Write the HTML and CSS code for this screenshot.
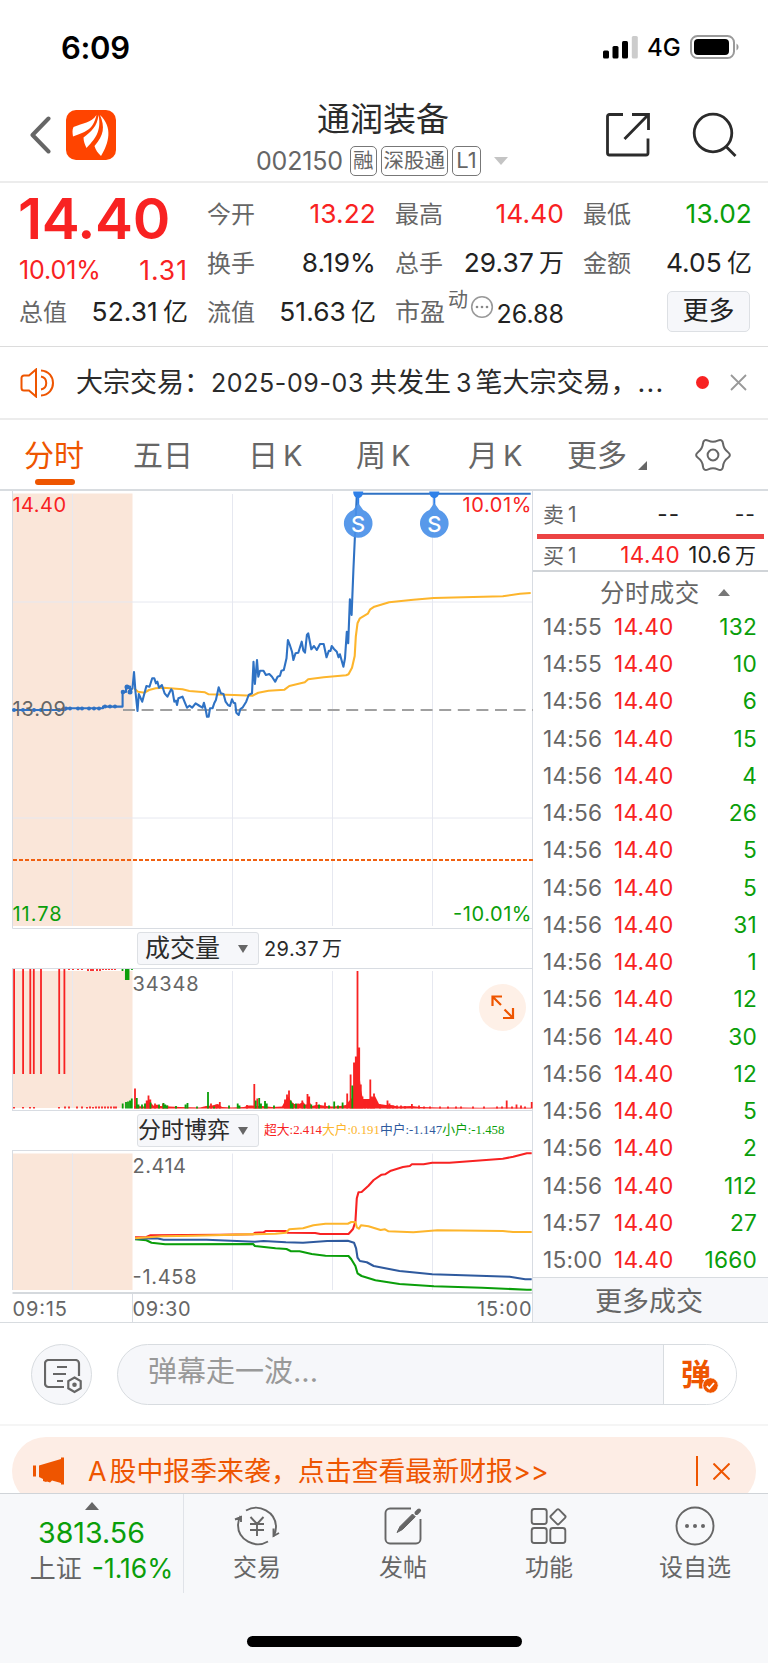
FILE: index.html
```
<!DOCTYPE html>
<html lang="zh-CN">
<head>
    <meta charset="UTF-8">
    <meta name="viewport" content="width=device-width, initial-scale=1.0">
    <title>通润装备 002150</title>
    <link rel="stylesheet" href="styles.css">
</head>
<body>
    <div class="status-bar">
        <span class="clock">6:09</span>
        <div class="status-icons">
            <svg width="36" height="23" viewBox="0 0 36 23">
                <rect x="0" y="14.5" width="6" height="8" rx="1.5"/>
                <rect x="9.5" y="10" width="6" height="12.5" rx="1.5"/>
                <rect x="19" y="5" width="6" height="17.5" rx="1.5"/>
                <rect x="28.8" y="0" width="6" height="22.5" rx="1.5" fill="#ccc"/>
            </svg>
            <span class="network">4G</span>
            <svg width="50" height="24" viewBox="0 0 50 24">
                <rect x="1" y="1" width="43" height="22" rx="6.5" fill="none" stroke="#9a9a9a" stroke-width="2"/>
                <rect x="4" y="4" width="35" height="16" rx="4"/>
                <path d="M46.5 8.500a4 4 0 0 1 0 7z" fill="#9a9a9a"/>
            </svg>
        </div>
    </div>

    <header class="header">
        <div class="header-left">
            <svg width="22" height="38" viewBox="0 0 22 38"><path d="M18.500 2.500 2.500 19l16 16.500" fill="none" stroke="#666" stroke-width="4" stroke-linecap="round" stroke-linejoin="round"/></svg>
            <svg class="logo" width="50" height="50" viewBox="0 0 50 50">
                <rect width="50" height="50" rx="10" fill="#ff4400"/>
                <path d="M30.500 5C25 13 17 13 7.500 17c-1.500 3-1 6-.5 9.500C18 22 27 21 30.500 5z" fill="#fff"/>
                <path d="M32.500 5c-1.500 12-7 16-15 22.500 0 4 1.500 7 3 10.500C28 30 36 22 32.500 5z" fill="#fff"/>
                <path d="M34 5c5 12 4 20-5.500 31 1 4 3.500 7 6.500 10 8-13 12-29-1-41z" fill="#fff"/>
            </svg>
        </div>
        <div class="header-title">
            <h1>通润装备</h1>
            <div class="code-row">
                <span class="code">002150</span>
                <span class="tag">融</span>
                <span class="tag">深股通</span>
                <span class="tag level1">L1</span>
                <svg class="caret" width="14" height="8" viewBox="0 0 14 8"><path d="M0 0h14L7 8z" fill="#c4c4c4"/></svg>
            </div>
        </div>
        <div class="header-right">
            <svg width="46" height="46" viewBox="0 0 46 46" fill="none" stroke="#2b2b2b" stroke-width="2.800">
                <path d="M18 2.500H4.500a2 2 0 0 0-2 2V41a2 2 0 0 0 2 2H41a2 2 0 0 0 2-2V26.500M27 2.500h16.500V18M43 3 19.500 27"/>
            </svg>
            <svg width="46" height="46" viewBox="0 0 46 46" fill="none" stroke="#2b2b2b" stroke-width="2.800">
                <circle cx="21" cy="21" r="18.800"/><path d="m34 34.500 9.500 9.500"/>
            </svg>
        </div>
    </header>

    <section class="quote">
        <div class="quote-col">
            <div class="price">14.40</div>
            <div class="change red"><span>10.01%</span><span class="diff">1.31</span></div>
            <div class="stat"><label>总值</label><b>52.31<i>亿</i></b></div>
        </div>
        <div class="quote-col">
            <div class="stat"><label>今开</label><b class="red">13.22</b></div>
            <div class="stat"><label>换手</label><b>8.19%</b></div>
            <div class="stat"><label>流值</label><b>51.63<i>亿</i></b></div>
        </div>
        <div class="quote-col">
            <div class="stat"><label>最高</label><b class="red">14.40</b></div>
            <div class="stat"><label>总手</label><b>29.37<i>万</i></b></div>
            <div class="stat pe">
                <label>市盈<sup>动</sup></label>
                <svg width="24" height="24" viewBox="0 0 24 24"><circle cx="12" cy="12" r="10.300" fill="none" stroke="#999" stroke-width="1.600"/><g fill="#888"><circle cx="7" cy="12" r="1.300"/><circle cx="12" cy="12" r="1.300"/><circle cx="17" cy="12" r="1.300"/></g></svg>
                <b>26.88</b>
            </div>
        </div>
        <div class="quote-col">
            <div class="stat"><label>最低</label><b class="green">13.02</b></div>
            <div class="stat"><label>金额</label><b>4.05<i>亿</i></b></div>
            <div class="stat"><button class="more-btn">更多</button></div>
        </div>
    </section>

    <section class="notice">
        <svg width="36" height="30" viewBox="0 0 36 30" fill="none" stroke="#ee5500" stroke-width="2">
            <path d="M16 1.500v27L9 22.500H4a2.500 2.500 0 0 1-2.500-2.500V10A2.500 2.500 0 0 1 4 7.500h5zM21 2.500c16 1 16 24 0 25M21 8.500c7 1.500 7 11.500 0 13"/>
        </svg>
        <span class="notice-text">大宗交易：<em class="date">2025-09-03</em>共发生<em>3</em>笔大宗交易，<span class="ellipsis">...</span></span>
        <span class="dot"></span>
        <svg width="17" height="17" viewBox="0 0 17 17"><path d="m1 1 15 15M16 1 1 16" stroke="#999" stroke-width="1.800"/></svg>
    </section>

    <nav class="tabs">
        <a class="tab active">分时</a>
        <a class="tab">五日</a>
        <a class="tab">日<em>K</em></a>
        <a class="tab">周<em>K</em></a>
        <a class="tab">月<em>K</em></a>
        <a class="tab tab-more">更多<svg width="9" height="9" viewBox="0 0 9 9"><path d="M9 0v9H0z" fill="#666"/></svg></a>
        <svg class="gear" width="36" height="34" viewBox="-18 -17 36 34" fill="none" stroke="#666" stroke-width="2">
            <circle r="5.400"/>
            <path d="M14.800 3.050Q10.600 6.100 10.050 11.300 9.500 16.500 4.750 14.350 0 12.200-4.750 14.350-9.500 16.500-10.050 11.300-10.600 6.100-14.800 3.050-19 0-14.800-3.050-10.600-6.100-10.050-11.300-9.500-16.500-4.750-14.350 0-12.200 4.750-14.350 9.500-16.500 10.050-11.300 10.600-6.100 14.800-3.050 19 0 14.800 3.050z"/>
        </svg>
    </nav>

    <main class="market">
        <div class="charts">
            <!-- price -->
            <svg class="chart" width="533" height="438" viewBox="0 491 533 438">
                <rect x="13" y="493.500" width="119.500" height="432.500" fill="#fae6d9"/>
                <path class="grid" d="M72.500 494v432M232.500 494v432M332.500 494v432M432.500 494v432M13 602h520M13 818h520"/>
                <path class="frame" d="M12.500 491v437.500H533M532.500 491v438"/>
                <path d="M123 710h410" stroke="#a0a0a0" stroke-width="1.800" stroke-dasharray="12 6.600"/>
                <path d="M13 860h520" stroke="#f06010" stroke-width="2" stroke-dasharray="4 2"/>
                <polyline class="line yellow-line" points="134,688.3 138,691.7 144.600,692.7 149,690 155.700,688.3 163.600,687.7 182.500,689.3 189.400,691 205,692.3 208.700,694.3 234.200,695 252.400,695.7 258.300,692.7 268.600,690.7 284.500,689.7 289.300,686 304.800,682.3 308.200,679.3 323.700,677.3 346.100,675.3 348.500,674.3 352,667.7 354.700,656 355.800,636.7 357.500,623.3 359.900,618.3 367.800,613.7 370.200,609.3 374.300,606.7 389.200,602.3 413.300,599.7 433.900,598 502.800,596.3 520,593.7 530.700,593"/>
                <polyline class="line price-line" points="13,710 65,710 65,708.3 103,708.3 103,706.6 122.600,706.6 122.600,692 126,692 126,686.5 130,686.5 130,692 132.500,688 134,672 135.500,692 137.500,711 138.800,694 142.200,701.7 144.600,692.7 146.400,686 149.500,686.7 152.200,678.3 154.300,678.3 156,683.3 157.400,681.7 159,687.7 161.900,685 164.600,693.3 167.400,696.7 171.200,689.3 172.500,691 174.300,701.7 176,700.7 177,705 178.400,698.3 182.500,696.7 184.900,702.7 187,707.7 189.400,705.7 192.200,707.7 195.600,703.3 199.700,706 202.500,707.7 203.900,702.7 205.600,709.3 207,716.7 208.700,716.7 210,708.3 212.500,708.3 214.200,703.3 215.900,700 218.700,687.3 220.800,693.3 223.500,694 225.600,701.7 228,705 230,706 232,699.3 233.500,702.7 235.200,703.3 236.300,712.7 238.700,715 240.400,709 242.800,707.3 246.200,701.7 248.700,695 252,693.3 253.500,661.7 254.900,684 257,660 258.300,676.7 260,670.7 263.500,670.7 265.900,675 269.300,674 272,676.7 275.200,681.7 277.600,676.7 280,675.7 281.400,670.7 283.800,670 286.500,658.3 287.900,640 289.600,644.3 292,651.7 293.400,660 295.500,653.3 298.300,652.7 301.700,641.7 303.400,650.7 305,652.7 306.900,635 308.200,633.3 311.300,649.3 314,646 316.800,650 320,644 323.700,644 326.500,657.3 328.900,650.7 330.500,651 331.700,646 334,649 336.800,651.7 338.500,657.3 339.900,654.3 343.400,666.7 345,658.3 346.800,631.7 348.200,643.3 349.900,599.3 351.600,615 353.400,570 356.800,495 357,493.700 530.700,493.700"/>
                <g fill="#2f72c4">
                    <circle cx="14" cy="710" r="2"/><circle cx="23" cy="710" r="2"/><circle cx="34" cy="710" r="2"/><circle cx="41" cy="710" r="2"/><circle cx="59" cy="710" r="2"/>
                    <circle cx="66" cy="708.500" r="2"/><circle cx="70" cy="708.500" r="2"/><circle cx="78" cy="708.500" r="2"/><circle cx="82" cy="708.500" r="2"/><circle cx="89" cy="708.500" r="2"/><circle cx="94" cy="708.500" r="2"/><circle cx="99" cy="708.500" r="2"/>
                    <circle cx="105" cy="706.500" r="2"/><circle cx="110" cy="706.500" r="2"/><circle cx="115" cy="706.500" r="2"/><circle cx="123" cy="692" r="2.300"/><circle cx="127" cy="687" r="2.500"/><circle cx="130" cy="692" r="2.500"/>
                </g>
                <g fill="#2f80e8">
                    <path d="M353.200 491.500h10c0 4-2 6.500-5 6.500s-5-2.500-5-6.500zM429.300 491.500h10c0 4-2 6.500-5 6.500s-5-2.500-5-6.500z"/>
                    <path d="M358.200 497v8M434.300 497v8" stroke="#2f80e8" stroke-width="2"/>
                </g>
                <path d="M358.200 503l5 7a14.300 14.300 0 1 1-10 0zM434.300 503l5 7a14.300 14.300 0 1 1-10 0z" fill="#4a90e8" fill-opacity=".92"/>
                <text class="marker" x="358.200" y="531.500">S</text>
                <text class="marker" x="434.300" y="531.500">S</text>
                <text class="red" x="12.500" y="511.800" textLength="53.500">14.40</text>
                <text class="red" x="462.500" y="511.800" textLength="69">10.01%</text>
                <text x="12.500" y="716" textLength="53.500">13.09</text>
                <text class="green" x="12.500" y="921" textLength="49">11.78</text>
                <text class="green" x="453" y="921" textLength="78.500">-10.01%</text>
            </svg>

            <div class="indicator">
                <span class="select">成交量<i></i></span>
                <span class="volume-total"><em>29.37</em>万</span>
            </div>

            <!-- volume -->
            <svg class="chart" width="533" height="143" viewBox="0 968 533 143">
                <rect x="13" y="971" width="119.500" height="137" fill="#fae6d9"/>
                <path class="grid" d="M72.500 971v137M232.500 971v137M332.500 971v137M432.500 971v137"/>
                <path class="frame" d="M12.500 968.500H533M12.500 1110.500H533M12.500 968v143M532.500 968v143"/>
                <path class="bar red-bar" stroke-width="2.200" d="M14.100 969v105M23.100 969v105M30.300 969v105M33.800 969v105M41 969v105M59.200 969v105M64.400 969v105"/>
                <path class="bar red-bar" d="M69 969v1M73 969v1M78 969v1M82 969v1M88 969v2M91 969v2M93 969v2M97 969v2M100 969v2M103 969v1M106 969v1M109 969v1M112 969v1M115 969v1"/>
                <path class="bar green-bar" d="M122.500 969v2M132 969v1"/>
                <path stroke="#0a9e0a" stroke-width="4.500" d="M127.200 969v11"/>
                <path class="bar red-bar" d="M14 1108.500v-1.500M23 1108.500v-1.500M30 1108.500v-1.500M34 1108.500v-1.500M59 1108.500v-1.500M65 1108.500v-2M69 1108.500v-2M77 1108.500v-2M82 1108.500v-2M87 1108.500v-1.500M90 1108.500v-2M93 1108.500v-1.500M96 1108.500v-2M99 1108.500v-2M102 1108.500v-2M105 1108.500v-2M108 1108.500v-2M111 1108.500v-2M114 1108.500v-2M116 1108.500v-2"/>
                <polygon class="red-area" points="134,1108.500 134,1106 144,1106.500 146,1103 151,1103 154,1106 157,1104.500 160,1106 170,1106.500 180,1107 200,1107.500 206,1106 212,1105.500 218,1104 222,1107 232,1107.500 244,1107 248,1105.500 252,1105.500 256,1106 262,1106 272,1107 282,1106.500 285,1101 288,1096 291,1101 294,1104 299,1104 303,1102 306,1105 309,1101 312,1106 316,1105 320,1105 326,1106 332,1106.500 340,1106 346,1105 349,1101 352,1098 354,1085 359,1070 361,1090 363,1099 369,1099 372,1098 375,1096 379,1104 386,1105 391,1105 398,1106.500 412,1106 420,1107 440,1107.500 450,1107.500 462,1107.500 480,1107.800 500,1107.500 531,1107.800 531,1108.500"/>
                <path class="bar red-bar" d="M135 1108.500v-20M146.700 1108.500v-8M148.500 1108.500v-13M150.300 1108.500v-9M155 1108.500v-5M163 1108.500v-5M167.500 1108.500v-3M211 1108.500v-5M216.500 1108.500v-4M219.800 1108.500v-6.500M247 1108.500v-3.500M254.300 1108.500v-24.500M257.300 1108.500v-10M285 1108.500v-9M287 1108.500v-14M289 1108.500v-18M293 1108.500v-5M298 1108.500v-5M302.300 1108.500v-8M307.500 1108.500v-14.500M309.200 1108.500v-12M316.500 1108.500v-6.500M325 1108.500v-6M347.200 1108.500v-15M350.600 1108.500v-34M354 1108.500v-46M355.800 1108.500v-52M357.500 971v137.500M359.200 1108.500v-61M360.800 1108.500v-24M362.500 1108.500v-12M365 1108.500v-9M368 1108.500v-9M370.300 1108.500v-29M372 1108.500v-12M374 1108.500v-15M380 1108.500v-4M387.500 1108.500v-8M389.500 1108.500v-5M393 1108.500v-3M397 1108.500v-3M401 1108.500v-3M405 1108.500v-2.500M411.900 1108.500v-4.500M419 1108.500v-3M424 1108.500v-2M430 1108.500v-2M440 1108.500v-2M448 1108.500v-2M456 1108.500v-2M461 1108.500v-2M473 1108.500v-2M484 1108.500v-2M497 1108.500v-2M502 1108.500v-2M506.700 1108.500v-8M512 1108.500v-2M516.500 1108.500v-4M521 1108.500v-3M525 1108.500v-2M531.700 1108.500v-6.500"/>
                <path class="bar green-bar" d="M122.700 1108.500v-5M126 1108.500v-6.500M128 1108.500v-7M130 1108.500v-8M131.800 1108.500v-10M136.800 1108.500v-10.500M138.500 1108.500v-4M142 1108.500v-4M145 1108.500v-5M150.500 1108.500v-6M159 1108.500v-4M163.500 1108.500v-5.500M165.300 1108.500v-4M167 1108.500v-3M176 1108.500v-2.500M185.500 1108.500v-4M187.500 1108.500v-5.500M197 1108.500v-2M208 1108.500v-16.500M214 1108.500v-2M229 1108.500v-3M237.700 1108.500v-5M239.500 1108.500v-3M255.700 1108.500v-8M259.200 1108.500v-10.500M261 1108.500v-5M265 1108.500v-7.500M266.800 1108.500v-5M274 1108.500v-3M290.800 1108.500v-8M292.500 1108.500v-5M296 1108.500v-5M304.500 1108.500v-4M311.300 1108.500v-4M319 1108.500v-4M329 1108.500v-3M334.200 1108.500v-7M338 1108.500v-3M342.600 1108.500v-6M352.300 1108.500v-23"/>
                <circle cx="502.500" cy="1007.500" r="23.500" fill="#fef0e7"/>
                <path d="M501 1005l-8.500-8.500M492.500 1006v-9.500h9.500M504.500 1009.500l8.500 8.500M513 1008v10h-10" fill="none" stroke="#ee5500" stroke-width="2.200"/>
                <text x="132.500" y="991.300" textLength="66">34348</text>
            </svg>

            <div class="indicator game">
                <span class="select">分时博弈<i></i></span>
                <span class="legend"><span class="red">超大:2.414</span><span class="orange">大户:0.191</span><span class="blue">中户:-1.147</span><span class="green">小户:-1.458</span></span>
            </div>

            <!-- money flow by order size -->
            <svg class="chart" width="533" height="172" viewBox="0 1150 533 172">
                <rect x="13" y="1153.500" width="119.500" height="136.500" fill="#fae6d9"/>
                <path class="grid" d="M72.500 1153.500v136.500M232.500 1153.500v136.500M332.500 1153.500v136.500M432.500 1153.500v136.500"/>
                <path class="frame" d="M12.500 1150.500H533M12.500 1150v140M532.500 1150v172M132.500 1293v29"/>
                <path d="M12.500 1293H533" stroke="#d5d9dd" stroke-width="2"/>
                <polyline class="line green-line" points="135,1239.3 146.400,1240.3 151.500,1242.7 165.300,1244.3 253.100,1244 254.900,1246 275.500,1248.3 286.500,1249 291,1251.3 299.600,1251.3 311.700,1254 325.500,1255.7 348.500,1256 351.300,1259.3 355.400,1266 357.500,1273.3 361.600,1276 375.400,1280.3 399.500,1284 433.900,1286.3 482,1287.7 526.900,1289.7 531.700,1289.7"/>
                <polyline class="line blue-line" points="135,1238.7 156.700,1238.3 163.600,1239.7 206.600,1239.7 254.900,1241.7 263.500,1241 285.900,1242.3 303,1242.7 327.200,1241 347.800,1240.7 354,1242.7 356.100,1248.3 357.500,1257.7 359.900,1261 366.800,1262.3 373.700,1266 399.500,1271 432.200,1274.3 509.700,1276.7 525.200,1279.3 531.700,1279.3"/>
                <polyline class="line red-line" points="135,1237.3 146.400,1237 150.500,1235.3 220.400,1234.7 253.100,1234.3 254.900,1232.7 263.500,1232.3 265.900,1231 285.900,1231 287.600,1232.7 315.100,1233 320.300,1234 348.500,1234 350.600,1231.7 353,1229 355.400,1221.7 356.800,1198.3 358.500,1192.3 361.600,1192 368.500,1185.7 373.700,1180 381.600,1174.7 385,1174.3 390.900,1170.7 403,1167 409.800,1166 411.900,1164.3 423.600,1164.3 432.200,1162.7 449.400,1162.7 502.800,1158.7 513.200,1156.7 526.900,1153.3 531.700,1153.3"/>
                <polyline class="line yellow-line" points="135,1238.3 161.900,1236.3 193,1235.7 275.500,1233.7 285.900,1232.7 289.300,1229.3 303,1228.3 313.400,1225.3 325.500,1223.7 347.800,1223.7 351.300,1222 355.400,1222 356.800,1227.3 358.900,1228.7 361,1225.3 368.500,1226.3 380.600,1230 385,1229.3 388.500,1231.3 413.300,1232.3 437.400,1230.3 502.800,1231 513,1232 531.700,1232"/>
                <text x="132.500" y="1173.300" textLength="53.500">2.414</text>
                <text x="132.500" y="1284" textLength="64">-1.458</text>
                <text x="12.500" y="1316" textLength="54.500">09:15</text>
                <text x="132.500" y="1316" textLength="58">09:30</text>
                <text x="477" y="1316" textLength="54.500">15:00</text>
            </svg>
        </div>

        <aside class="trades">
            <div class="level"><span>卖<em>1</em></span><span class="lv-price dash">--</span><span class="lv-vol dash">--</span></div>
            <div class="level-bar"></div>
            <div class="level buy"><span>买<em>1</em></span><span class="lv-price red">14.40</span><span class="lv-vol"><em>10.6</em>万</span></div>
            <div class="trades-title">分时成交<svg width="12" height="7" viewBox="0 0 12 7"><path d="M6 0l6 7H0z" fill="#777"/></svg></div>
            <ul class="trade-list">
                <li><span>14:55</span><span class="red">14.40</span><span class="green">132</span></li>
                <li><span>14:55</span><span class="red">14.40</span><span class="green">10</span></li>
                <li><span>14:56</span><span class="red">14.40</span><span class="green">6</span></li>
                <li><span>14:56</span><span class="red">14.40</span><span class="green">15</span></li>
                <li><span>14:56</span><span class="red">14.40</span><span class="green">4</span></li>
                <li><span>14:56</span><span class="red">14.40</span><span class="green">26</span></li>
                <li><span>14:56</span><span class="red">14.40</span><span class="green">5</span></li>
                <li><span>14:56</span><span class="red">14.40</span><span class="green">5</span></li>
                <li><span>14:56</span><span class="red">14.40</span><span class="green">31</span></li>
                <li><span>14:56</span><span class="red">14.40</span><span class="green">1</span></li>
                <li><span>14:56</span><span class="red">14.40</span><span class="green">12</span></li>
                <li><span>14:56</span><span class="red">14.40</span><span class="green">30</span></li>
                <li><span>14:56</span><span class="red">14.40</span><span class="green">12</span></li>
                <li><span>14:56</span><span class="red">14.40</span><span class="green">5</span></li>
                <li><span>14:56</span><span class="red">14.40</span><span class="green">2</span></li>
                <li><span>14:56</span><span class="red">14.40</span><span class="green">112</span></li>
                <li><span>14:57</span><span class="red">14.40</span><span class="green">27</span></li>
                <li><span>15:00</span><span class="red">14.40</span><span class="green">1660</span></li>
            </ul>
            <div class="more-trades">更多成交</div>
        </aside>
    </main>

    <section class="comment">
        <div class="round-btn">
            <svg width="38" height="35" viewBox="0 0 38 35" fill="none" stroke="#666" stroke-width="2.200">
                <path d="M35 17V4.500A3.500 3.500 0 0 0 31.500 1H4.500A3.500 3.500 0 0 0 1 4.500v20A3.500 3.500 0 0 0 4.500 28H20M13 8h10M9 15h13M13 22h6"/>
                <path d="M30.500 18.500l6.200 3.600v7.200l-6.200 3.600-6.200-3.600v-7.200z"/><circle cx="30.500" cy="25.700" r="1.200" fill="#666"/>
            </svg>
        </div>
        <div class="danmu">
            <span class="placeholder">弹幕走一波...</span>
            <div class="danmu-switch">
                <span>弹</span>
                <svg width="17" height="17" viewBox="0 0 17 17"><circle cx="8.500" cy="8.500" r="7.800" fill="#ee5500" stroke="#fff" stroke-width="1"/><path d="M4.800 9l2.500 2.500L12 6" fill="none" stroke="#fff" stroke-width="1.800"/></svg>
            </div>
        </div>
    </section>

    <section class="banner-wrap">
        <div class="banner">
            <svg width="32" height="28" viewBox="0 0 32 28" fill="#ee5500"><path d="M0 8.500h3v11H0zM6 8.500 28 2V.5h3V27.500h-3V26l-9-2.500-2 2-3-1-1 .5-3-1v-2L6 20z"/></svg>
            <span class="banner-text"><em>A</em>股中报季来袭，点击查看最新财报&gt;&gt;</span>
            <span class="banner-line"></span>
            <svg width="17" height="17" viewBox="0 0 17 17"><path d="m.5.5 16 16M16.500.5l-16 16" stroke="#ee5500" stroke-width="2"/></svg>
        </div>
    </section>

    <footer class="bottom-bar">
        <div class="index">
            <svg width="14" height="8" viewBox="0 0 14 8"><path d="M7 0l7 8H0z" fill="#666"/></svg>
            <div class="index-value">3813.56</div>
            <div class="index-name">上证<em>-1.16%</em></div>
        </div>
        <div class="action">
            <svg width="46" height="40" viewBox="-23 -20 46 40" fill="none" stroke="#666" stroke-width="1.900">
                <path d="M-11-15.500C2-23 19-14 19 1c0 4-1 7-2.500 9.500M16.500 2.500v7.500l5.500-3M11 15.500C-2 23-19 14-19-1c0-4 1-6 2.500-9M-22-6.500l6-2.500v5"/>
                <path d="M-6.500-9 0-2l6.500-7M0-2v12M-7-2H7M-7 4H7"/>
            </svg>
            <span>交易</span>
        </div>
        <div class="action">
            <svg width="40" height="40" viewBox="-20 -20 40 40" fill="none" stroke="#666" stroke-width="1.900">
                <path d="M8-17.500h-21a4.500 4.500 0 0 0-4.500 4.500v26a4.500 4.500 0 0 0 4.500 4.500h26a4.500 4.500 0 0 0 4.500-4.500V-7"/>
                <path d="M-6 6.500 -3 .5 9.500-12l2.800 2.800L-.5 3.500z" fill="#666" stroke-width="1"/><path d="M13.500-13l2.500-2.500" stroke-width="4" stroke-linecap="round"/>
            </svg>
            <span>发帖</span>
        </div>
        <div class="action">
            <svg width="40" height="40" viewBox="-20 -20 40 40" fill="none" stroke="#666" stroke-width="1.900">
                <rect x="-17.300" y="-17" width="15" height="15" rx="2.500"/><rect x="-17.300" y="2" width="15" height="15" rx="2.500"/><rect x="1.300" y="2" width="15" height="15" rx="2.500"/>
                <rect x="3.300" y="-15" width="11.500" height="11.500" rx="1.500" transform="rotate(45 9 -9.300)"/>
            </svg>
            <span>功能</span>
        </div>
        <div class="action">
            <svg width="40" height="40" viewBox="-20 -20 40 40" fill="none" stroke="#666" stroke-width="1.900">
                <circle r="18.500"/><g fill="#666" stroke="none"><circle cx="-8" r="2"/><circle r="2"/><circle cx="8" r="2"/></g>
            </svg>
            <span>设自选</span>
        </div>
        <div class="home-indicator"></div>
    </footer>
</body>
</html>
```
FILE: styles.css
```
* {
    box-sizing: border-box;
}
body {
    margin: 0;
    width: 768px;
    height: 1663px;
    overflow: hidden;
    background: #fff;
    color: #222;
    font-family: Inter, "Noto Sans CJK SC", sans-serif;
    font-size: 24px;
    line-height: 1;
}
svg {
    display: block;
    flex: none;
}
em, i {
    font-style: normal;
}
.red {
    color: #f82222;
    fill: #f82222;
}
.green {
    color: #0a9e0a;
    fill: #0a9e0a;
}
.orange {
    color: #fdb52c;
}
.blue {
    color: #2f5a9e;
}

/* status bar */
.status-bar {
    height: 94px;
    padding: 0 28px 0 61px;
    display: flex;
    justify-content: space-between;
    align-items: center;
}
.clock {
    font-size: 31px;
    font-weight: 600;
    color: #000;
    letter-spacing: -0.3px;
}
.status-icons {
    display: flex;
    align-items: center;
}
.network {
    font-size: 24px;
    font-weight: 500;
    margin: 1px 9px 0 8px;
    width: 34px;
    color: #000;
}

/* header */
.header {
    height: 89px;
    padding: 0 30px;
    display: flex;
    border-bottom: 2px solid #ececec;
}
.header-left {
    display: flex;
    align-items: center;
    width: 226px;
    height: 82px;
}
.logo {
    margin-left: 14px;
}
.header-title {
    width: 254px;
}
h1 {
    margin: 7px 0 0;
    font-size: 33px;
    font-weight: 400;
    line-height: 36px;
    text-align: center;
    color: #2b2b2b;
}
.code-row {
    display: flex;
    align-items: center;
    height: 30px;
    margin-top: 9px;
    color: #666;
}
.code {
    font-size: 25px;
    letter-spacing: -0.2px;
    width: 94px;
}
.tag {
    height: 30px;
    padding: 0 2px;
    margin-right: 4px;
    border: 1.5px solid #777;
    border-radius: 5px;
    font-size: 20.5px;
    line-height: 27px;
}
.level1 {
    width: 29px;
    padding: 0;
    font-size: 22px;
    text-align: center;
}
.caret {
    margin-left: 9px;
}
.header-right {
    display: flex;
    justify-content: space-between;
    align-items: center;
    height: 82px;
    width: 133px;
    margin-left: auto;
}

/* quote */
.quote {
    height: 164px;
    padding: 7px 0 0 19px;
    display: grid;
    grid-template-columns: repeat(4, 169px);
    column-gap: 19px;
    border-bottom: 1px solid #dcdcdc;
}
.stat {
    height: 49px;
    display: flex;
    justify-content: space-between;
    align-items: center;
}
.stat label {
    color: #666;
    font-size: 24px;
}
.stat b {
    font-weight: 400;
    font-size: 26.3px;
    letter-spacing: 0.1px;
}
.stat i {
    font-size: 25px;
    margin-left: 5px;
}
.price {
    height: 58px;
    margin-left: -1px;
    line-height: 57px;
    font-size: 57px;
    font-weight: 600;
    letter-spacing: -0.4px;
    color: #f82222;
}
.change {
    height: 40px;
    padding-top: 5px;
    display: flex;
    justify-content: space-between;
    align-items: center;
    font-size: 25px;
    letter-spacing: -0.1px;
}
.diff {
    font-size: 26.5px;
    letter-spacing: 1px;
}
.pe label {
    font-size: 25px;
    display: flex;
}
.pe sup {
    font-size: 20px;
    margin: -10px 0 0 3px;
}
.pe svg {
    margin: -12px 0 0 -1px;
}
.pe b {
    font-size: 25px;
    margin-top: 3px;
    letter-spacing: 0;
}
.more-btn {
    width: 83px;
    height: 41px;
    margin: -3px 2px 0 auto;
    padding: 0;
    border: 1.5px solid #dde0e4;
    border-radius: 5px;
    background: #f6f7fa;
    color: #222;
    font: 26px/1 Inter, "Noto Sans CJK SC", sans-serif;
}

/* notice */
.notice {
    height: 73px;
    padding: 0 21px 0 20px;
    display: flex;
    align-items: center;
    border-bottom: 2px solid #ececec;
}
.notice-text {
    margin-left: 20px;
    width: 620px;
    font-size: 27px;
    white-space: nowrap;
    color: #2b2b2b;
}
.notice-text em {
    font-size: 25px;
    margin: 0 4px 0 5px;
}
.notice-text .date {
    letter-spacing: 0.6px;
    margin: 0 6px 0 0;
}
.ellipsis {
    letter-spacing: 1.3px;
}
.dot {
    width: 13px;
    height: 13px;
    margin-right: 21px;
    border-radius: 50%;
    background: #f82222;
}

/* tabs */
.tabs {
    height: 71px;
    padding-left: 24px;
    display: flex;
    color: #666;
    font-size: 30px;
    border-bottom: 2px solid #d8dce0;
}
.tab {
    width: 110px;
    padding-top: 20px;
}
.tab em {
    margin-left: 5px;
    font-size: 29px;
}
.tab:nth-child(3) {
    margin-left: 5px;
    width: 108px;
}
.tab:nth-child(4) {
    width: 112px;
}
.tab:nth-child(5) {
    width: 99px;
}
.tab.active {
    color: #ee5500;
    width: 109px;
}
.tab.active::after {
    content: "";
    display: block;
    width: 40px;
    height: 6px;
    margin: 9px 0 0 11px;
    border-radius: 3px;
    background: #ee5500;
}
.tab-more {
    display: flex;
    width: 128px;
}
.tab-more svg {
    margin: 21px 0 0 11px;
}
.gear {
    margin-top: 18px;
}

/* charts */
.market {
    display: flex;
    height: 832px;
    border-bottom: 1px solid #d8dce0;
}
.charts {
    width: 533px;
}
.chart text {
    font-size: 20px;
    fill: #666;
}
.chart text.red {
    fill: #f82222;
}
.chart text.green {
    fill: #0a9e0a;
}
.chart text.marker {
    font-size: 22px;
    font-weight: 500;
    fill: #fff;
    text-anchor: middle;
}
.grid {
    stroke: #e6e8f0;
    stroke-width: 1;
    fill: none;
}
.frame {
    stroke: #d8dce2;
    stroke-width: 1;
    fill: none;
}
.line {
    fill: none;
    stroke-width: 2.1;
    stroke-linejoin: round;
}
.price-line {
    stroke: #2f72c4;
}
.yellow-line {
    stroke: #fdb52c;
}
.red-line {
    stroke: #f82222;
}
.blue-line {
    stroke: #2f5a9e;
}
.green-line {
    stroke: #0a9e0a;
}
.bar {
    fill: none;
    stroke-width: 1.8;
}
.red-bar {
    stroke: #f82222;
}
.green-bar {
    stroke: #0a9e0a;
}
.red-area {
    fill: #f82222;
}
.indicator {
    height: 39px;
    padding-left: 137px;
    display: flex;
    align-items: center;
    border-right: 1px solid #d8dce2;
}
.select {
    flex: none;
    width: 122px;
    height: 33px;
    padding: 0 10px 0 7px;
    display: flex;
    justify-content: space-between;
    align-items: center;
    border: 1px solid #dde0e4;
    border-radius: 3px;
    background: #f6f7fa;
    font-size: 25px;
    color: #2b2b2b;
}
.select i {
    border: 5px solid transparent;
    border-top: 8px solid #666;
    border-bottom: 0;
}
.volume-total {
    margin-left: 5px;
    font-size: 20px;
    color: #2b2b2b;
}
.volume-total em {
    letter-spacing: 0.4px;
    margin-right: 3px;
}
.game .select {
    padding-left: 0;
    font-size: 23px;
}
.legend {
    margin-left: 5px;
    font: 12.8px/1 "Liberation Serif", "Noto Sans CJK SC", serif;
    white-space: nowrap;
}

/* trades */
.trades {
    width: 235px;
    color: #666;
}
.level {
    height: 43px;
    padding: 4px 12px 0 10px;
    display: flex;
    align-items: center;
    font-size: 21px;
}
.level > span:first-child {
    width: 50px;
}
.level > span:first-child em {
    margin-left: 4px;
}
.lv-price {
    width: 87px;
    text-align: right;
    font-size: 22.5px;
    letter-spacing: 0.3px;
}
.lv-vol {
    flex: 1;
    text-align: right;
    color: #222;
    white-space: nowrap;
}
.lv-vol em {
    font-size: 22.5px;
    margin-right: 4px;
}
.dash {
    color: #222;
    letter-spacing: 1px;
}
.level-bar {
    height: 4.5px;
    margin: 0 4px;
    background: #ec4444;
}
.buy {
    height: 33px;
    padding-top: 3px;
    border-bottom: 2px solid #d0d4d8;
}
.trades-title {
    height: 44.500px;
    padding: 0 38px 2px 67px;
    display: flex;
    justify-content: space-between;
    align-items: center;
    font-size: 24.5px;
    letter-spacing: 0.4px;
}
.trade-list {
    list-style: none;
    margin: 0;
    padding: 0 11px 0 10px;
    font-size: 22.7px;
    letter-spacing: 0.2px;
}
.trade-list li {
    height: 37.24px;
    display: flex;
}
.trade-list span {
    width: 71px;
}
.trade-list .green {
    flex: 1;
    text-align: right;
}
.more-trades {
    height: 45px;
    margin-top: -9.5px;
    padding-right: 3px;
    border-top: 1px solid #d8dce0;
    background: #f6f7fa;
    font-size: 27px;
    line-height: 48px;
    text-align: center;
}

/* comment */
.comment {
    height: 103px;
    padding: 21px 31px 0;
    display: flex;
    border-bottom: 2px solid #f5f5f5;
}
.round-btn {
    width: 61px;
    height: 61px;
    padding: 14px 0 0 12px;
    border: 1px solid #d8dce0;
    border-radius: 50%;
    background: #f6f7fa;
}
.danmu {
    width: 620px;
    height: 61px;
    margin-left: 25px;
    padding-left: 30px;
    display: flex;
    justify-content: space-between;
    border: 1px solid #d8dce0;
    border-radius: 31px;
    background: #f6f7fa;
    overflow: hidden;
}
.placeholder {
    font-size: 29px;
    line-height: 54px;
    color: #999;
}
.danmu-switch {
    display: flex;
    width: 73px;
    padding: 14px 0 0 17px;
    border-left: 1px solid #d8dce0;
    background: #fff;
    color: #ee5500;
    font-size: 30px;
    font-weight: 700;
}
.danmu-switch svg {
    margin: 18px 0 0 -9px;
}

/* banner */
.banner-wrap {
    height: 67px;
    padding: 11px 12px 0;
    overflow: hidden;
}
.banner {
    height: 68px;
    padding: 0 26px 0 21px;
    display: flex;
    align-items: center;
    border-radius: 34px;
    background: #fdede5;
    color: #ee5500;
}
.banner-text {
    margin-left: 23px;
    width: 608px;
    font-size: 26.9px;
    white-space: nowrap;
}
.banner-text em {
    margin-right: 3px;
}
.banner-line {
    width: 1.5px;
    height: 30px;
    margin-right: 15px;
    background: #ee5500;
}

/* bottom bar */
.bottom-bar {
    height: 170px;
    display: grid;
    grid-template-columns: 184px repeat(4, 146px);
    grid-template-rows: 99px 1fr;
    border-top: 1.5px solid #d0d4d8;
    background: #f7f8fa;
    color: #666;
}
.index {
    border-right: 1px solid #e0e3e8;
    display: flex;
    flex-direction: column;
    align-items: center;
    padding-top: 8px;
}
.index-value {
    margin-top: 9px;
    font-size: 28.6px;
    color: #0a9e0a;
}
.index-name {
    margin: 7px -20px 0 0;
    font-size: 26px;
    white-space: nowrap;
}
.index-name em {
    margin-left: 10px;
    color: #0a9e0a;
    font-size: 26.5px;
}
.action {
    display: flex;
    flex-direction: column;
    align-items: center;
    padding-top: 12px;
}
.action span {
    margin-top: 10px;
    font-size: 24px;
}
.home-indicator {
    grid-column: 1 / -1;
    width: 275px;
    height: 11px;
    margin: 43px auto 0;
    border-radius: 6px;
    background: #000;
}
```
